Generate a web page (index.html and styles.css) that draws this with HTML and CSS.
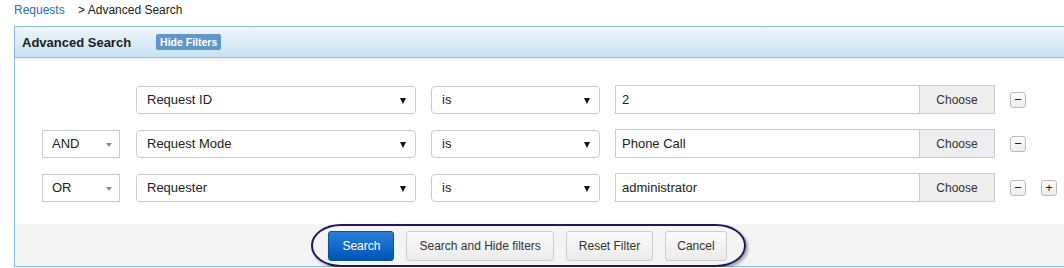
FILE: index.html
```html
<!doctype html>
<html lang="en">
<head>
    <meta charset="utf-8">
    <title>Advanced Search</title>
    <link rel="stylesheet" href="styles.css">
</head>
<body>
    <div class="crumbs">
        <a href="#" class="crumb-link">Requests</a>
        <span class="crumb-here">&gt; Advanced Search</span>
    </div>

    <div class="panel">
        <div class="panel-head">
            <span class="panel-title">Advanced Search</span>
            <span class="hide-filters">Hide Filters</span>
        </div>

        <div class="filters">
            <div class="filter-row">
                <div class="logic-slot"></div>
                <div class="select field"><span>Request ID</span></div>
                <div class="select op"><span>is</span></div>
                <div class="value-group">
                    <input class="value-input" type="text" value="2">
                    <button class="choose-btn">Choose</button>
                </div>
                <button class="mini-btn">&minus;</button>
                <div class="mini-slot"></div>
            </div>
            <div class="filter-row">
                <div class="logic"><span>AND</span></div>
                <div class="select field"><span>Request Mode</span></div>
                <div class="select op"><span>is</span></div>
                <div class="value-group">
                    <input class="value-input" type="text" value="Phone Call">
                    <button class="choose-btn">Choose</button>
                </div>
                <button class="mini-btn">&minus;</button>
                <div class="mini-slot"></div>
            </div>
            <div class="filter-row">
                <div class="logic"><span>OR</span></div>
                <div class="select field"><span>Requester</span></div>
                <div class="select op"><span>is</span></div>
                <div class="value-group">
                    <input class="value-input" type="text" value="administrator">
                    <button class="choose-btn">Choose</button>
                </div>
                <button class="mini-btn">&minus;</button>
                <button class="mini-btn">+</button>
            </div>
        </div>

        <div class="panel-foot">
            <div class="action-ring">
                <button class="btn btn-primary">Search</button>
                <button class="btn">Search and Hide filters</button>
                <button class="btn">Reset Filter</button>
                <button class="btn btn-cancel">Cancel</button>
            </div>
        </div>
    </div>
</body>
</html>
```

FILE: styles.css
```css
body {
    margin: 0;
    font-family: "Liberation Sans", Arial, sans-serif;
    font-size: 13px;
    color: #222;
    background: #fff;
    overflow: hidden;
}

.crumbs {
    height: 26px;
    box-sizing: border-box;
    padding: 3px 0 0 14px;
    font-size: 12px;
    line-height: 15px;
}

.crumb-link {
    color: #2a6cb5;
    text-decoration: none;
    margin-right: 10px;
}

.crumb-here {
    color: #222;
}

.panel {
    margin-left: 14px;
    width: 1070px;
    border: 1px solid #8dbde6;
}

.panel-head {
    height: 30px;
    display: flex;
    align-items: center;
    gap: 25px;
    padding: 0 7px;
    background: linear-gradient(#eff5fb, #c6e2f2);
    border-bottom: 1px solid #8dbde6;
    box-shadow: 0 2px 3px rgba(0, 0, 0, 0.08);
    position: relative;
}

.panel-title {
    font-weight: bold;
    color: #1d1d1d;
}

.hide-filters {
    background: #5f97c9;
    color: #fff;
    font-size: 10.5px;
    font-weight: bold;
    padding: 0 4px;
    line-height: 16px;
    border-radius: 2px;
}

.filters {
    padding: 27px 0 22px 27px;
    display: flex;
    flex-direction: column;
    gap: 15px;
}

.filter-row {
    display: flex;
    align-items: center;
    height: 29px;
    gap: 15px;
}

.logic-slot,
.logic {
    width: 78px;
    height: 28px;
    box-sizing: border-box;
    margin-right: 1px;
}

.logic {
    border: 1px solid #ccc;
    padding-left: 9px;
    line-height: 26px;
    position: relative;
}

.logic::after {
    content: "";
    position: absolute;
    right: 7px;
    top: 12px;
    border-left: 3px solid transparent;
    border-right: 3px solid transparent;
    border-top: 4px solid #8a8a8a;
}

.select {
    height: 28px;
    box-sizing: border-box;
    border: 1px solid #ccc;
    border-radius: 4px;
    padding-left: 10px;
    line-height: 26px;
    position: relative;
}

.select::after {
    content: "";
    position: absolute;
    right: 9px;
    top: 11px;
    border-left: 3px solid transparent;
    border-right: 3px solid transparent;
    border-top: 6px solid #111;
}

.field {
    width: 280px;
}

.op {
    width: 169px;
}

.value-group {
    display: flex;
    width: 380px;
    height: 29px;
}

.value-input {
    flex: 1;
    min-width: 0;
    height: 29px;
    box-sizing: border-box;
    border: 1px solid #ccc;
    border-right: none;
    padding: 0 6px;
    font: inherit;
    color: #222;
    outline: none;
}

.choose-btn {
    width: 76px;
    height: 29px;
    border: 1px solid #ccc;
    background: #eee;
    font: 12px "Liberation Sans", Arial, sans-serif;
    color: #333;
    padding: 0;
}

.mini-btn,
.mini-slot {
    width: 16px;
    height: 16px;
    margin-top: 1px;
}

.mini-btn {
    box-sizing: border-box;
    border: 1px solid #bbb;
    border-radius: 3px;
    background: linear-gradient(#fdfdfd, #ececec);
    padding: 0;
    font: 13px/14px "Liberation Sans", Arial, sans-serif;
    color: #222;
    text-align: center;
}

.panel-foot {
    height: 42px;
    background: #f4f4f4;
    display: flex;
    justify-content: center;
    align-items: flex-start;
    padding-right: 43px;
}

.action-ring {
    height: 43px;
    box-sizing: border-box;
    display: flex;
    align-items: center;
    gap: 11px;
    padding: 0 17px 0 15px;
    border: 2px solid #24145e;
    border-radius: 30px / 21px;
    box-shadow: 2px 2px 3px rgba(0, 0, 0, 0.35);
    position: relative;
}

.btn {
    height: 30px;
    box-sizing: border-box;
    padding: 0 12px;
    border: 1px solid #ccc;
    border-radius: 3px;
    background: linear-gradient(#fbfbfb, #ebebeb);
    font: 12px "Liberation Sans", Arial, sans-serif;
    color: #333;
    margin-top: 1px;
}

.btn + .btn {
    margin-left: 1px;
}

.btn-primary {
    padding: 0 13px;
    color: #fff;
    border-color: #0a4fa3;
    background: linear-gradient(#2a80db, #0053b5);
}

.btn-cancel {
    padding: 0 11px;
}
```
